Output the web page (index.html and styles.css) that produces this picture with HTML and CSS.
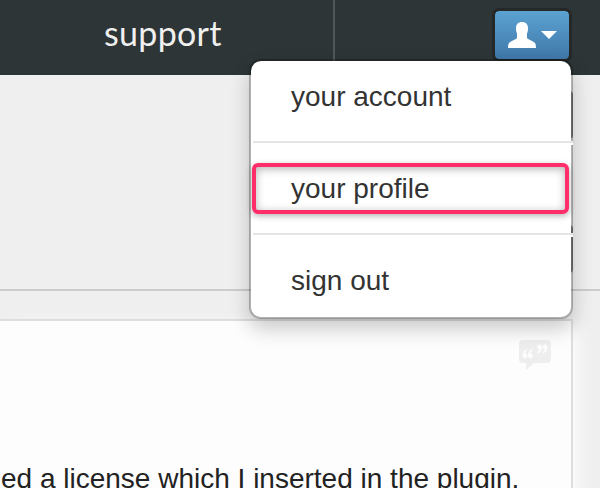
FILE: index.html
```
<!DOCTYPE html>
<html lang="en">
<head>
  <meta charset="UTF-8">
  <meta name="viewport" content="width=device-width, initial-scale=1.0">
  <title>Support</title>
  <link rel="stylesheet" href="styles.css">
</head>
<body>
  <header class="navbar">
    <a class="nav-link" href="#">support</a>
    <div class="user-menu">
      <button class="user-btn" aria-label="Account menu">
        <svg class="icon-user" width="28" height="26" viewBox="0 0 28 26">
          <path fill="#fff" d="M14 0C9.800 0 8 2.500 8 6.500C8 8.500 8.500 10.500 9 11.500V16C8.500 17.500 3 18.500 1 21C.2 22 0 24 0 26H28C28 24 27.800 22 27 21C25 18.500 19.500 17.500 19 16V11.500C19.500 10.500 20 8.500 20 6.500C20 2.500 18.200 0 14 0Z"/>
        </svg>
        <span class="caret"></span>
      </button>
      <ul class="dropdown">
        <li class="item"><a href="#">your account</a></li>
        <li class="divider"></li>
        <li class="item selected"><a href="#">your profile</a></li>
        <li class="divider"></li>
        <li class="item last"><a href="#">sign out</a></li>
      </ul>
    </div>
  </header>

  <main class="content">
    <div class="toolbar">
      <span class="tool-btn"></span>
      <span class="tool-btn"></span>
    </div>
    <div class="post">
      <svg class="icon-quote" width="32" height="31" viewBox="0 0 32 31">
        <path fill="#eee" d="M4 0H28Q32 0 32 4V19Q32 23 28 23H15L7 30V23H4Q0 23 0 19V4Q0 0 4 0Z"/>
        <g fill="#fdfdfd">
          <path id="quote" d="M8 9C5 10 3.500 12.500 3.500 15.500C3.500 17.200 4.500 18 6 18C7.400 18 8.300 17 8.300 15.700C8.300 14.500 7.500 13.600 6.300 13.500C6.400 12 7 10.800 8.300 10Z"/>
          <use href="#quote" x="5.500"/>
          <use href="#quote" transform="rotate(180 16 11.300)"/>
          <use href="#quote" transform="rotate(180 16 11.300) translate(5.500 0)"/>
        </g>
      </svg>
      <p class="post-text">ed a license which I inserted in the plugin.</p>
    </div>
  </main>
</body>
</html>
```

FILE: styles.css
```
* {
  box-sizing: border-box;
}

body {
  margin: 0;
  height: 488px;
  overflow: hidden;
  font-family: "Liberation Sans", Arial, sans-serif;
  font-size: 28px;
  background: #efefef;
  color: #222;
}

a {
  color: inherit;
  text-decoration: none;
}

.navbar {
  display: flex;
  height: 75px;
  background: #2d3536;
}

.nav-link {
  width: 335px;
  padding: 12px 0 0 104px;
  border-right: 2px solid #505758;
  font-family: "Lato", "Open Sans", sans-serif;
  font-size: 34px;
  line-height: 42px;
  letter-spacing: 0.3px;
  color: #f0f0f0;
}

.user-menu {
  position: relative;
  margin: 8px 28px 0 auto;
}

.user-btn {
  display: flex;
  align-items: center;
  gap: 5px;
  width: 80px;
  height: 54px;
  padding: 0 12px 0 13px;
  border: 3px solid #252829;
  border-radius: 7px;
  background: linear-gradient(#5ba3d2, #3f77a8) padding-box;
}

.caret {
  border: 8px solid transparent;
  border-top-color: #fff;
  border-bottom: 0;
}

.dropdown {
  position: absolute;
  top: 51px;
  right: -1px;
  width: 324px;
  height: 260px;
  margin: 0;
  padding: 0 0 0 2px;
  list-style: none;
  background: #fff padding-box;
  border: 2px solid rgba(0, 0, 0, 0.25);
  border-radius: 12px;
  box-shadow: 0 10px 20px rgba(0, 0, 0, 0.2);
}

.item {
  height: 48px;
  margin: 16px 0;
  padding-left: 38px;
  line-height: 40px;
  color: #333;
}

.divider {
  height: 4px;
  margin-right: -2px;
  border-top: 2px solid #e5e5e5;
  background: #fff;
}

.selected {
  height: 51px;
  margin: 18px 2px 19px -1px;
  padding-left: 35px;
  line-height: 44px;
  border: 4px solid #ff2d6a;
  border-radius: 6px;
  box-shadow: 0 2px 6px rgba(0, 0, 0, 0.3), inset 0 2px 8px rgba(0, 0, 0, 0.3);
}

.last {
  margin-top: 24px;
}

.toolbar {
  display: flex;
  flex-direction: column;
  align-items: flex-end;
  gap: 86px;
  height: 216px;
  padding: 16px 27px 0 0;
  border-bottom: 2px solid #ccc;
}

.tool-btn {
  width: 60px;
  height: 48px;
  border-radius: 4px;
  background: #888;
}

.post {
  display: flex;
  flex-direction: column;
  width: 573px;
  height: 190px;
  margin-top: 28px;
  border: solid #ddd;
  border-width: 2px 2px 0 0;
  background: #fdfdfd;
  box-shadow: 6px 6px 16px rgba(255, 255, 255, 0.8);
}

.icon-quote {
  margin: 19px 20px 0 auto;
}

.post-text {
  margin: 92px 0 0 1px;
  line-height: 32px;
  white-space: nowrap;
}
```
